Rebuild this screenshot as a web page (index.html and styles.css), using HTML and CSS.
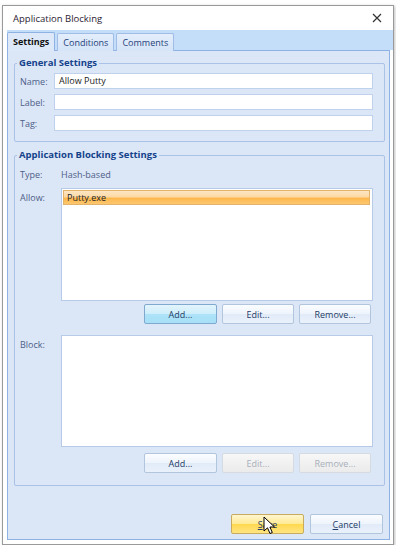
FILE: index.html
```html
<!DOCTYPE html>
<html>
<head>
  <meta charset="UTF-8">
  <title>Application Blocking</title>
  <link rel="stylesheet" href="styles.css">
</head>
<body>
<div class="window">
  <div class="titlebar">
    <span class="title">Application Blocking</span>
    <svg class="close" width="10" height="10" viewBox="0 0 10 10">
      <path d="M1 1 L9 9 M9 1 L1 9" stroke="#333" stroke-width="1.2" fill="none"/>
    </svg>
  </div>
  <div class="tabstrip">
    <span class="tab active">Settings</span>
    <span class="tab">Conditions</span>
    <span class="tab">Comments</span>
  </div>
  <div class="panel">
    <fieldset class="group general">
      <legend>General Settings</legend>
      <div class="row">
        <label>Name:</label>
        <div class="input">Allow Putty</div>
      </div>
      <div class="row">
        <label>Label:</label>
        <div class="input"></div>
      </div>
      <div class="row">
        <label>Tag:</label>
        <div class="input"></div>
      </div>
    </fieldset>

    <fieldset class="group blocking">
      <legend>Application Blocking Settings</legend>
      <div class="row type">
        <label>Type:</label>
        <span class="value">Hash-based</span>
      </div>
      <div class="row list-row">
        <label>Allow:</label>
        <ul class="listbox allow">
          <li class="selected">Putty.exe</li>
        </ul>
      </div>
      <div class="buttons">
        <button class="btn hover">Add...</button>
        <button class="btn">Edit...</button>
        <button class="btn">Remove...</button>
      </div>
      <div class="row list-row block">
        <label>Block:</label>
        <ul class="listbox"></ul>
      </div>
      <div class="buttons second">
        <button class="btn">Add...</button>
        <button class="btn" disabled>Edit...</button>
        <button class="btn" disabled>Remove...</button>
      </div>
    </fieldset>

    <div class="footer">
      <button class="btn save"><u>S</u>ave</button>
      <button class="btn cancel"><u>C</u>ancel</button>
    </div>
  </div>

  <!-- mouse pointer over Save -->
  <svg class="cursor" width="14" height="20" viewBox="0 0 14 20">
    <path d="M1 1 L1 15 L4.5 11.8 L7 17.5 L9.3 16.5 L6.9 11 L11.5 11 Z" fill="#fff" stroke="#000" stroke-width="1" stroke-linejoin="round"/>
  </svg>
</div>
</body>
</html>
```

FILE: styles.css
```css
body {
  margin: 0;
  background: #fff;
  font-family: "Open Sans", "Noto Sans", sans-serif;
  font-size: 9px;
}

.window {
  position: relative;
  box-sizing: border-box;
  width: 392px;
  height: 540px;
  margin: 5px 0 0 2px;
  border: 1px solid #9a9a9a;
  box-shadow: 1px 1px 3px rgba(0, 0, 0, 0.25);
  background: #fff;
  display: flex;
  flex-direction: column;
}

.titlebar {
  height: 24px;
  display: flex;
  align-items: center;
  justify-content: space-between;
  padding: 0 10px 0 10px;
}
.title {
  font-size: 9.5px;
  color: #2b2233;
}
.close {
  margin-right: 1px;
}

.tabstrip {
  height: 20px;
  margin-left: 4px;
  background: #c4ddf9;
  display: flex;
  align-items: flex-end;
  gap: 2px;
  position: relative;
  z-index: 1;
}
.tab {
  box-sizing: border-box;
  height: 18px;
  margin-bottom: -1px;
  padding: 0 5px;
  border: 1px solid #9fbde6;
  border-bottom: none;
  border-radius: 2px 2px 0 0;
  background: linear-gradient(#e4eefb, #d5e4f8);
  color: #1e3f79;
  line-height: 17px;
}
.tab.active {
  height: 19px;
  padding: 0 5px;
  background: #dde8f8;
  border-color: #8db2e3;
  font-weight: bold;
  color: #111;
}

.panel {
  flex: 1;
  margin: 0 3px 4px 4px;
  border: 1px solid #8db2e3;
  background: #dbe6f7;
  display: flex;
  flex-direction: column;
  padding: 0 4px 0 6px;
}

.group {
  margin: 6px 0 0 0;
  border: 1px solid #a9c2e6;
  border-radius: 2px;
  padding: 4px 11px 10px 5px;
  min-width: 0;
}
.group legend {
  padding: 0 2px;
  margin-left: -3px;
  font-weight: bold;
  font-size: 9.5px;
  color: #15428b;
  line-height: 12px;
}
.blocking {
  margin-top: 7px;
  padding: 6px 11px 12px 5px;
}

.row {
  display: flex;
  align-items: center;
  margin-bottom: 5px;
}
.row:last-child {
  margin-bottom: 0;
}
.row label {
  width: 34px;
  flex: none;
  color: #4d6087;
}
.input {
  flex: 1;
  box-sizing: border-box;
  height: 16px;
  padding: 0 4px;
  background: #fff;
  border: 1px solid #bfd1ec;
  color: #222;
  line-height: 14px;
}

.blocking .row label {
  width: 41px;
}
.value {
  color: #4d6087;
}
.type {
  height: 14px;
  margin-bottom: 7px;
}
.list-row {
  align-items: flex-start;
  margin-bottom: 0;
}
.list-row label {
  padding-top: 3px;
}
.block {
  margin-top: 11px;
}

.listbox {
  flex: 1;
  box-sizing: border-box;
  height: 113px;
  margin: 0;
  padding: 1px;
  list-style: none;
  background: #fff;
  border: 1px solid #b7cbe8;
}
.block .listbox {
  height: 112px;
}
.listbox li {
  box-sizing: border-box;
  height: 15px;
  margin-right: 1px;
  padding: 0 3px;
  line-height: 13px;
  color: #222;
}
.listbox li.selected {
  border: 1px solid #e3b36c;
  background: linear-gradient(#fde6c4 0%, #fcd9a5 45%, #fdb84e 55%, #fdc66f 100%);
}

.buttons {
  display: flex;
  justify-content: flex-end;
  gap: 5px;
  margin-top: 3px;
  padding-right: 2px;
}
.buttons.second {
  margin-top: 6px;
}

.btn {
  box-sizing: border-box;
  width: 72px;
  height: 20px;
  padding: 0;
  border: 1px solid #b1c5dd;
  border-radius: 2px;
  background: linear-gradient(#fbfdff 0%, #eef4fc 50%, #e1ebf8 51%, #e9f1fb 100%);
  font-family: inherit;
  font-size: 9px;
  color: #1f3c66;
}
.btn:first-child {
  width: 73px;
}
.btn.hover {
  border-color: #7fa9cf;
  background: linear-gradient(#e3f4fc 0%, #cdeefb 50%, #aee2f8 51%, #a6e0f7 100%);
}
.btn:disabled {
  border-color: #d6dbe2;
  background: linear-gradient(#f7f7f7, #ebebeb);
  color: #a8afba;
}

.footer {
  margin-top: auto;
  display: flex;
  justify-content: flex-end;
  gap: 6px;
  padding: 0 2px 5px 0;
}
.btn.save {
  border-color: #c8ab5c;
  background: linear-gradient(#fff6cf 0%, #ffe993 50%, #ffd84e 51%, #ffe582 100%);
}
.btn.cancel {
  width: 73px;
}
.btn u {
  text-decoration: underline;
}

.cursor {
  position: absolute;
  left: 260px;
  top: 510px;
}
```
